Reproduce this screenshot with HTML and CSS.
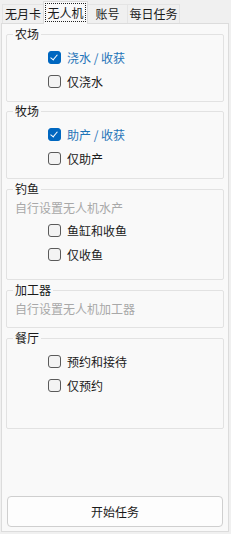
FILE: index.html
```html
<!DOCTYPE html>
<html lang="zh-CN">
<head>
    <meta charset="UTF-8">
    <meta name="viewport" content="width=device-width, initial-scale=1.0">
    <title>无人机</title>
    <link rel="stylesheet" href="styles.css">
</head>
<body>
    <div class="tabs">
        <div class="tab tab-first">无月卡</div>
        <div class="tab active"><span class="focus">无人机</span></div>
        <div class="tab tab-short">账号</div>
        <div class="tab tab-wide">每日任务</div>
    </div>
    <div class="panel">
        <fieldset class="group">
            <legend>农场</legend>
            <label class="row checked"><span class="box"></span>浇水 / 收获</label>
            <label class="row"><span class="box"></span>仅浇水</label>
        </fieldset>
        <fieldset class="group">
            <legend>牧场</legend>
            <label class="row checked"><span class="box"></span>助产 / 收获</label>
            <label class="row"><span class="box"></span>仅助产</label>
        </fieldset>
        <fieldset class="group group-fish">
            <legend>钓鱼</legend>
            <div class="hint">自行设置无人机水产</div>
            <label class="row"><span class="box"></span>鱼缸和收鱼</label>
            <label class="row"><span class="box"></span>仅收鱼</label>
        </fieldset>
        <fieldset class="group group-proc">
            <legend>加工器</legend>
            <div class="hint">自行设置无人机加工器</div>
        </fieldset>
        <fieldset class="group group-rest">
            <legend>餐厅</legend>
            <label class="row"><span class="box"></span>预约和接待</label>
            <label class="row"><span class="box"></span>仅预约</label>
        </fieldset>
        <button class="start">开始任务</button>
    </div>
</body>
</html>
```

FILE: styles.css
```css
body {
    margin: 0;
    width: 231px;
    height: 534px;
    background-color: #f0f0f0;
    font-family: "Noto Sans CJK SC", "Microsoft YaHei", sans-serif;
    font-size: 12px;
    color: #1a1a1a;
    display: flex;
    flex-direction: column;
}

/* tab strip */
.tabs {
    display: flex;
    align-items: flex-end;
    height: 23px;
    padding-left: 2px;
}

.tab {
    height: 19px;
    line-height: 18px;
    border: 1px solid #e4e4e4;
    border-bottom: none;
    margin-left: -1px;
    background-color: #f0f0f0;
    box-sizing: border-box;
    text-align: center;
    white-space: nowrap;
}

.tab-first {
    width: 42px;
    margin-left: 0;
}

.tab-short {
    width: 41px;
}

.tab-wide {
    width: 53px;
}

.tab.active {
    width: 45px;
    height: 23px;
    padding: 1px 1px 0;
    background-color: #f9f9f9;
    border-color: #dcdcdc;
    position: relative;
    z-index: 1;
    margin-bottom: -1px;
}

.focus {
    display: block;
    height: 19px;
    line-height: 17px;
    border: 1px dotted #222;
    box-sizing: border-box;
}

/* main page */
.panel {
    margin: 0 2px 0 1px;
    height: 509px;
    box-sizing: border-box;
    border: 1px solid #dcdcdc;
    background-color: #f9f9f9;
    padding: 2px 4px 4px 4px;
    display: flex;
    flex-direction: column;
}

.group {
    margin: 0 0 1px;
    padding: 3px 6px 8px;
    border: 1px solid #e2e2e2;
    border-radius: 2px;
    min-width: 0;
}

.group legend {
    padding: 0 2px;
    line-height: 16px;
}

.group-fish {
    padding-bottom: 13px;
    margin-top: 1px;
}

.group-proc {
    padding-bottom: 8px;
    margin-top: 1px;
}

.group-rest {
    padding-bottom: 31px;
    margin-top: 1px;
}

.hint {
    padding: 0 2px;
    line-height: 16px;
    color: #a8a8a8;
    margin-bottom: 2px;
}

.row {
    display: flex;
    align-items: center;
    height: 24px;
    margin-left: 35px;
    gap: 6px;
}

.box {
    width: 11px;
    height: 11px;
    border: 1px solid #5a5a5a;
    border-radius: 3px;
    background-color: #f3f3f3;
    position: relative;
}

.row.checked {
    color: #1f74b8;
}

.row.checked .box {
    background-color: #0067c0;
    border-color: #0067c0;
}

.row.checked .box::after {
    content: "";
    position: absolute;
    left: 3px;
    top: 1px;
    width: 3px;
    height: 6px;
    border: solid #fff;
    border-width: 0 1px 1px 0;
    transform: rotate(40deg);
}

.start {
    margin: auto 1px 0;
    height: 31px;
    background-color: #fdfdfd;
    border: 1px solid #cfcfcf;
    border-radius: 4px;
    font-family: inherit;
    font-size: 12px;
    color: #1a1a1a;
}
```
